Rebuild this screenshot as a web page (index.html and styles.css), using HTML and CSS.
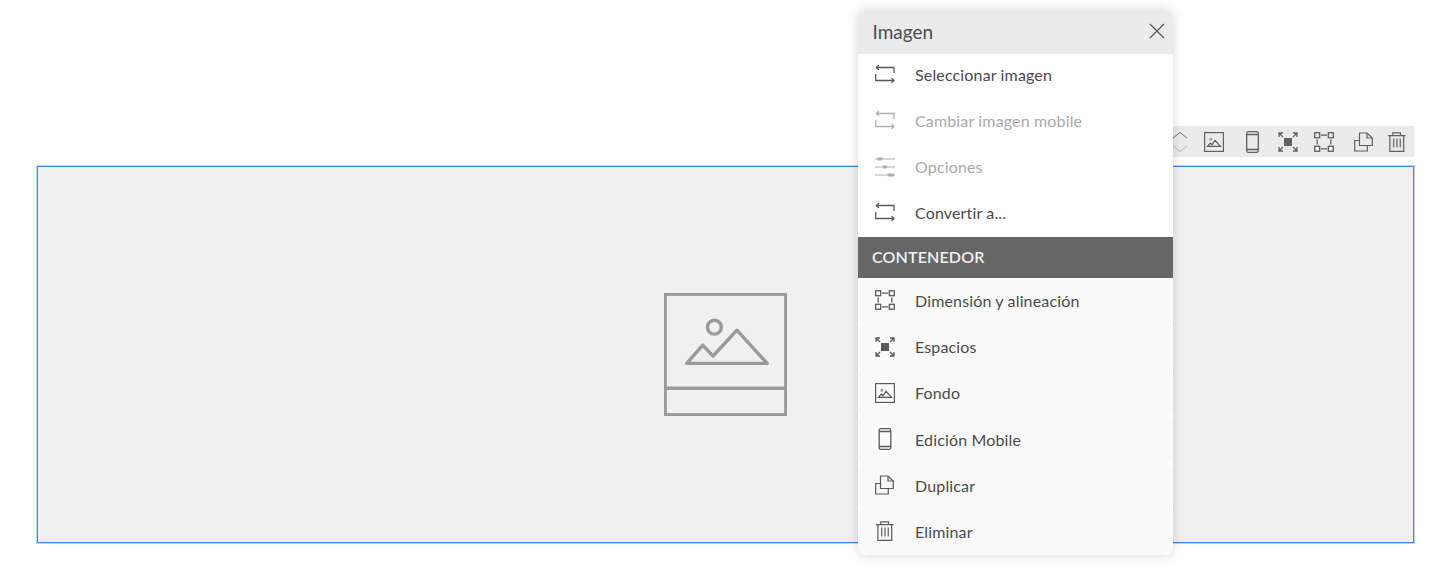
FILE: index.html
```html
<!DOCTYPE html>
<html lang="es">
<head>
<meta charset="utf-8">
<title>Imagen</title>
<link rel="stylesheet" href="styles.css">
</head>
<body>
<svg class="defs" width="0" height="0" aria-hidden="true">
  <symbol id="i-swap" viewBox="0 0 20 20" fill="none" stroke="currentColor" stroke-width="1.300">
    <path d="M1 3.500H19V9M1 3.500L4 1.300M1 3.500L4 5.700"/>
    <path d="M.7 10V16.500H19.300M19.300 16.500L16.500 14.300M19.300 16.500L16.500 18.700"/>
  </symbol>
  <symbol id="i-sliders" viewBox="0 0 20 20" fill="none" stroke="currentColor">
    <path d="M0 2H20M0 10H20M0 18H20" stroke-width="1"/>
    <path d="M2.500 2H7.500M8 10H12M12.500 18H19" stroke-width="3.200"/>
  </symbol>
  <symbol id="i-dim" viewBox="0 0 20 20" fill="none" stroke="currentColor" stroke-width="1.300">
    <rect x=".7" y=".7" width="5" height="5"/><rect x="14.300" y=".7" width="5" height="5"/>
    <rect x=".7" y="14.300" width="5" height="5"/><rect x="14.300" y="14.300" width="5" height="5"/>
    <path d="M7 3.200H13M7 16.800H13M3.200 7.500V12.500M16.800 7.500V12.500"/>
  </symbol>
  <symbol id="i-space" viewBox="0 0 20 20" fill="none" stroke="currentColor" stroke-width="1.300">
    <rect x="6" y="6" width="8" height="8" fill="currentColor" stroke="none"/>
    <path d="M1 5V1H5M1 1L5 5M19 5V1H15M19 1L15 5M1 15V19H5M1 19L5 15M19 15V19H15M19 19L15 15"/>
  </symbol>
  <symbol id="i-bg" viewBox="0 0 20 20" fill="none" stroke="currentColor">
    <rect x=".6" y=".6" width="18.800" height="18.800" stroke-width="1.200"/>
    <circle cx="6.800" cy="7.300" r="1" stroke-width=".8"/>
    <path d="M3.500 14.300L6.200 11.200L8 12.800L11 8.300L16.500 14.300Z" stroke-width="1.200"/>
  </symbol>
  <symbol id="i-phone" viewBox="0 0 13 22" fill="none" stroke="currentColor" stroke-width="1.300">
    <rect x=".7" y=".7" width="11.600" height="20.600" rx="1.500"/>
    <path d="M.7 3.500H12.300M.7 18.500H12.300"/>
  </symbol>
  <symbol id="i-copy" viewBox="0 0 20 20" fill="none" stroke="currentColor" stroke-width="1.200">
    <path d="M5.500 13.500V1H13L18.300 6V13.500Z"/>
    <path d="M13 1V6H18.300"/>
    <path d="M5.500 8.500H.7V19H13.300V13.500"/>
  </symbol>
  <symbol id="i-trash" viewBox="0 0 20 20" fill="none" stroke="currentColor" stroke-width="1.200">
    <path d="M1 3.600H18.500M5.800 3.500V.8H13.500V3.500M2.900 3.600V19.300H16.700V3.600"/>
    <path d="M6.700 6.500V15.500M10 6.500V15.500M13.300 6.500V15.500" stroke-width="1.500" stroke-opacity=".8"/>
  </symbol>
  <symbol id="i-close" viewBox="0 0 16 16" fill="none" stroke="currentColor" stroke-width="1.200">
    <path d="M1 1L15 15M15 1L1 15"/>
  </symbol>
</svg>

<main class="canvas">
  <section class="image-block">
    <svg class="placeholder" viewBox="0 0 124 124" fill="none" stroke="#9a9a9a" stroke-width="3.400">
      <rect x="1.200" y="1.200" width="121.600" height="121.600"/>
      <path d="M1.500 96H122.500"/>
      <circle cx="50.800" cy="34.500" r="7"/>
      <path d="M23 71L39 52.500L49.500 63.500L73.500 37.500L104 71Z" stroke-linejoin="round"/>
    </svg>
  </section>
</main>

<div class="toolbar">
  <svg class="tool-arrows" viewBox="0 0 16 22" fill="none" stroke-width="1"><path d="M1 7L8 1.500L15 7" stroke="#777"/><path d="M1 15L8 20.500L15 15" stroke="#bbb"/></svg>
  <svg class="tool-icon gap-16"><use href="#i-bg"/></svg>
  <svg class="tool-icon tool-phone gap-22"><use href="#i-phone"/></svg>
  <svg class="tool-icon gap-19"><use href="#i-space"/></svg>
  <svg class="tool-icon gap-16"><use href="#i-dim"/></svg>
  <svg class="tool-icon gap-20"><use href="#i-copy"/></svg>
  <svg class="tool-icon gap-13"><use href="#i-trash"/></svg>
</div>

<aside class="menu">
  <header class="menu-head">
    <span class="menu-title">Imagen</span>
    <svg class="close"><use href="#i-close"/></svg>
  </header>
  <ul class="group group-top">
    <li class="row first"><svg class="ico raised"><use href="#i-swap"/></svg>Seleccionar imagen</li>
    <li class="row off"><svg class="ico raised"><use href="#i-swap"/></svg>Cambiar imagen mobile</li>
    <li class="row off"><svg class="ico"><use href="#i-sliders"/></svg>Opciones</li>
    <li class="row"><svg class="ico raised"><use href="#i-swap"/></svg>Convertir a...</li>
  </ul>
  <div class="band">CONTENEDOR</div>
  <ul class="group group-bottom">
    <li class="row"><svg class="ico raised"><use href="#i-dim"/></svg>Dimensión y alineación</li>
    <li class="row"><svg class="ico nudged"><use href="#i-space"/></svg>Espacios</li>
    <li class="row"><svg class="ico"><use href="#i-bg"/></svg>Fondo</li>
    <li class="row"><svg class="ico ico-phone nudged"><use href="#i-phone"/></svg>Edición Mobile</li>
    <li class="row"><svg class="ico nudged"><use href="#i-copy"/></svg>Duplicar</li>
    <li class="row"><svg class="ico nudged"><use href="#i-trash"/></svg>Eliminar</li>
  </ul>
</aside>
</body>
</html>
```

FILE: styles.css
```css
* { box-sizing: border-box; }
html, body { margin: 0; height: 100%; }
body {
  background: #fff;
  font-family: Lato, "Open Sans", sans-serif;
  color: #444;
  overflow: hidden;
  position: relative;
}
.defs { position: absolute; }

.canvas { padding: 166px 42px 0 37px; }
.image-block {
  height: 377px;
  background: #f0f0f0;
  border: 1px solid #3b87ea;
  box-shadow: 0 0 0 1px rgba(59, 135, 234, .35);
  display: flex;
  align-items: center;
  justify-content: center;
}
.placeholder { width: 123px; height: 123px; display: block; }

.toolbar {
  position: absolute;
  top: 126px;
  left: 1165px;
  width: 249px;
  height: 31px;
  background: #ebebeb;
  display: flex;
  align-items: center;
  padding: 1px 0 0 7px;
}
.tool-arrows { width: 16px; height: 22px; flex: none; }
.tool-icon { width: 20px; height: 20px; flex: none; color: #606060; }
.tool-phone { width: 13px; height: 22px; }
.gap-16 { margin-left: 16px; }
.gap-22 { margin-left: 22px; }
.gap-19 { margin-left: 19px; }
.gap-20 { margin-left: 20px; }
.gap-13 { margin-left: 13px; }

.menu {
  position: absolute;
  left: 858px;
  top: 10px;
  width: 315px;
  height: 545px;
  background: #fff;
  border-radius: 8px;
  box-shadow: 0 0 12px rgba(0, 0, 0, .16);
  overflow: hidden;
}
.menu-head {
  height: 44px;
  background: #ebebeb;
  display: flex;
  align-items: center;
  justify-content: space-between;
  padding: 0 8px 0 14.500px;
}
.menu-title { font-size: 19px; color: #4d4d4d; margin-top: -2px; }
.close { width: 16px; height: 16px; color: #555; margin-top: -2px; }

.group { list-style: none; margin: 0; padding: 0; }
.row {
  height: 46px;
  display: flex;
  align-items: center;
  font-size: 16px;
  line-height: 20px;
  letter-spacing: .15px;
  color: #4a4a4a;
  padding-left: 17px;
  white-space: nowrap;
}
.row.first { height: 42px; margin-bottom: 2px; }
.row.off { color: #a9a9a9; }
.ico { width: 20px; height: 20px; margin-right: 20px; color: #5a5a5a; flex: none; }
.off .ico { color: #b0b0b0; }
.ico-phone { height: 22px; }
.raised { margin-top: -3px; }
.nudged { margin-top: -1px; }

.band {
  margin-top: 1px;
  height: 41px;
  background: #666;
  color: #f2f2f2;
  font-size: 16px;
  font-weight: 600;
  letter-spacing: .15px;
  line-height: 39px;
  padding-left: 14px;
}
.group-bottom .row {
  height: 46.170px;
  background: #fafafa;
  border-radius: 8px;
}
```
